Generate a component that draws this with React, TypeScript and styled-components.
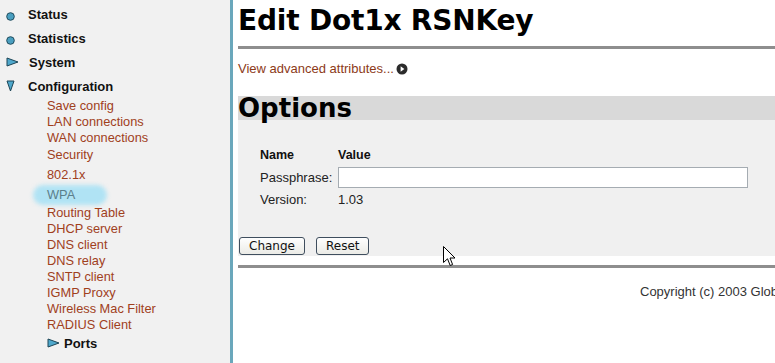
import styled, { createGlobalStyle } from 'styled-components';

const GlobalStyle = createGlobalStyle`
  html, body {
    margin: 0;
    padding: 0;
    background: #ffffff;
    overflow: hidden;
  }
  body {
    font-family: "Liberation Sans", Arial, sans-serif;
  }
`;

const Page = styled.div`
  display: flex;
  flex-direction: row;
  width: 775px;
  height: 363px;
  overflow: hidden;
  position: relative;
`;

const Sidebar = styled.nav`
  flex: 0 0 233px;
  background: #f1f1f1;
  border-right: 3px solid #6aa7bb;
  padding-top: 2px;
  box-sizing: border-box;
`;

const TopItem = styled.div`
  display: flex;
  align-items: center;
  height: 24px;
  font-size: 13px;
  font-weight: bold;
  color: #111;

  svg {
    flex: 0 0 auto;
    margin-left: 6px;
    margin-right: 10px;
  }
`;

const SubList = styled.ul`
  list-style: none;
  margin: 0;
  padding: 0 0 0 47px;
`;

const SubItem = styled.li<{ $gap?: number; $active?: boolean }>`
  position: relative;
  isolation: isolate;
  margin-top: ${(p) => p.$gap ?? 0}px;
  font-size: 12.8px;
  line-height: 16px;
  color: ${(p) => (p.$active ? '#5b7f8b' : '#a0401c')};

  ${(p) =>
    p.$active &&
    `
    &::before {
      content: '';
      position: absolute;
      left: -14px;
      width: 74px;
      top: -2px;
      bottom: -2px;
      border-radius: 10px;
      background: #b0e3f4;
      filter: blur(2px);
      z-index: -1;
    }
  `}
`;

const PortsItem = styled.li`
  display: flex;
  align-items: center;
  margin-top: 1px;
  height: 18px;
  font-size: 13px;
  font-weight: bold;
  color: #111;

  svg {
    margin-right: 4px;
  }
`;

const Main = styled.main`
  flex: 1 1 auto;
  min-width: 0;
  padding-left: 5px;
`;

const Title = styled.h1`
  margin: 0;
  padding-top: 3px;
  font-family: "DejaVu Sans", Verdana, sans-serif;
  font-size: 28px;
  line-height: 36px;
  letter-spacing: -0.2px;
  font-weight: bold;
  color: #000;
  white-space: nowrap;
`;

const Rule = styled.div<{ $top: number }>`
  margin-top: ${(p) => p.$top}px;
  height: 3px;
  background: #8e8e8e;
`;

const Advanced = styled.a`
  display: flex;
  align-items: center;
  gap: 2px;
  margin-top: 12px;
  font-size: 13px;
  line-height: 16px;
  color: #8c3a18;
  text-decoration: none;
`;

const Band = styled.div`
  margin-top: 19px;
  height: 24px;
  padding-top: 1px;
  box-sizing: border-box;
  background: #d9d9d9;
`;

const BandTitle = styled.h2`
  margin: 0;
  font-family: "DejaVu Sans", Verdana, sans-serif;
  font-size: 26px;
  line-height: 23px;
  font-weight: bold;
  color: #000;
`;

const Panel = styled.section`
  background: #f0f0f0;
  padding: 27px 0 1px 1px;
`;

const FieldGrid = styled.div`
  display: grid;
  grid-template-columns: 78px 410px;
  grid-auto-rows: auto;
  row-gap: 4px;
  align-items: center;
  margin-left: 21px;
  font-size: 13px;
  color: #222;
`;

const HeadCell = styled.div`
  font-size: 12.5px;
  font-weight: bold;
  line-height: 16px;
  color: #111;
`;

const Cell = styled.div`
  line-height: 16px;
  white-space: nowrap;
`;

const TextInput = styled.input`
  box-sizing: border-box;
  width: 410px;
  height: 21px;
  border: 1px solid #a5acb2;
  background: #fff;
  margin: 0;
  padding: 0 3px;
`;

const Buttons = styled.div`
  display: flex;
  gap: 11px;
  margin-top: 29px;
`;

const Button = styled.button`
  height: 18px;
  padding: 0 9px;
  font-family: "DejaVu Sans", Verdana, sans-serif;
  font-size: 12px;
  line-height: 16px;
  color: #111;
  border: 1px solid #3f4e5e;
  border-radius: 3px;
  background: linear-gradient(#fefefe, #ebebe6);
  cursor: default;
`;

const Footer = styled.footer`
  padding: 16px 0 0 402px;
  font-size: 13px;
  line-height: 16px;
  color: #333;
  white-space: nowrap;
`;

const Cursor = styled.svg`
  position: absolute;
  left: 443px;
  top: 246px;
`;

const Dot = () => (
  <svg width="9" height="9" viewBox="0 0 9 9" style={{ marginTop: 5 }}>
    <circle cx="4.5" cy="4.5" r="3.8" fill="#4a9fc0" stroke="#1f4b5c" strokeWidth="1" />
  </svg>
);

const RightArrow = () => (
  <svg width="13" height="10" viewBox="0 0 13 10">
    <path d="M1 1 L12 5 L1 9 Z" fill="#4fa8cc" stroke="#1d4556" strokeWidth="1" strokeLinejoin="round" />
  </svg>
);

const DownArrow = () => (
  <svg width="9" height="12" viewBox="0 0 9 12">
    <path d="M1 1 L8 1 L4.5 11 Z" fill="#4fa8cc" stroke="#1d4556" strokeWidth="1" strokeLinejoin="round" />
  </svg>
);

const GoIcon = () => (
  <svg width="12" height="12" viewBox="0 0 12 12">
    <circle cx="6" cy="6" r="5.5" fill="#2b2b2b" />
    <path d="M4.6 3.2 L8.4 6 L4.6 8.8 Z" fill="#fff" />
  </svg>
);

const subItems = [
  { label: 'Save config', gap: 0 },
  { label: 'LAN connections', gap: 0 },
  { label: 'WAN connections', gap: 0 },
  { label: 'Security', gap: 1 },
  { label: '802.1x', gap: 4 },
  { label: 'WPA', gap: 4, active: true },
  { label: 'Routing Table', gap: 2 },
  { label: 'DHCP server', gap: 0 },
  { label: 'DNS client', gap: 0 },
  { label: 'DNS relay', gap: 0 },
  { label: 'SNTP client', gap: 0 },
  { label: 'IGMP Proxy', gap: 0 },
  { label: 'Wireless Mac Filter', gap: 0 },
  { label: 'RADIUS Client', gap: 0 },
];

export default function App() {
  return (
    <>
      <GlobalStyle />
      <Page>
        <Sidebar>
          <TopItem><Dot /><span style={{ marginLeft: 3 }}>Status</span></TopItem>
          <TopItem><Dot /><span style={{ marginLeft: 3 }}>Statistics</span></TopItem>
          <TopItem><RightArrow /><span>System</span></TopItem>
          <TopItem><DownArrow /><span style={{ marginLeft: 3 }}>Configuration</span></TopItem>
          <SubList>
            {subItems.map((item) => (
              <SubItem key={item.label} $gap={item.gap} $active={item.active}>
                {item.label}
              </SubItem>
            ))}
            <PortsItem><RightArrow />Ports</PortsItem>
          </SubList>
        </Sidebar>
        <Main>
          <Title>Edit Dot1x RSNKey</Title>
          <Rule $top={7} />
          <Advanced href="#">View advanced attributes... <GoIcon /></Advanced>
          <Band><BandTitle>Options</BandTitle></Band>
          <Panel>
            <FieldGrid>
              <HeadCell>Name</HeadCell>
              <HeadCell>Value</HeadCell>
              <Cell>Passphrase:</Cell>
              <TextInput type="text" />
              <Cell>Version:</Cell>
              <Cell>1.03</Cell>
            </FieldGrid>
            <Buttons>
              <Button>Change</Button>
              <Button>Reset</Button>
            </Buttons>
          </Panel>
          <Rule $top={9} />
          <Footer>Copyright (c) 2003 GlobespanVirata, Inc.</Footer>
        </Main>
        <Cursor width="13" height="21" viewBox="0 0 13 21">
          <path d="M0.5 0.5 L0.5 16.5 L4.5 12.8 L7.2 19.5 L9.6 18.5 L7 12 L12 12 Z" fill="#fff" stroke="#000" strokeWidth="1" strokeLinejoin="miter" />
        </Cursor>
      </Page>
    </>
  );
}
